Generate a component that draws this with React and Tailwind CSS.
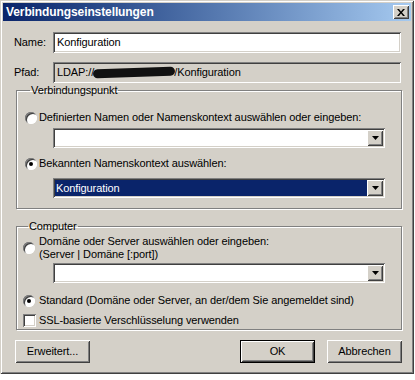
import React from 'react';

const sunken =
  'shadow-[inset_1px_1px_0_#808080,inset_-1px_-1px_0_#ffffff,inset_2px_2px_0_#404040,inset_-2px_-2px_0_#d4d0c8]';
const raised =
  'shadow-[inset_1px_1px_0_#ffffff,inset_-1px_-1px_0_#404040,inset_2px_2px_0_#d4d0c8,inset_-2px_-2px_0_#808080]';

function Radio({ checked }) {
  return (
    <div className="relative w-[12px] h-[12px] shrink-0 rounded-full bg-white shadow-[inset_1px_1px_0_#808080,inset_-1px_-1px_0_#ffffff,inset_2px_2px_0_#404040]">
      {checked && <div className="absolute left-[4px] top-[4px] w-[4px] h-[4px] rounded-full bg-black" />}
    </div>
  );
}

function Combo({ value, selected }) {
  return (
    <div className={`flex h-[20px] p-[2px] bg-white ${sunken}`}>
      <div className={`flex-1 flex items-center pl-[1px] ${selected ? 'bg-[#0a246a] text-white' : ''}`}>
        {value}
      </div>
      <div className={`w-[16px] flex items-center justify-center bg-[#d4d0c8] ${raised}`}>
        <svg width="7" height="4" viewBox="0 0 7 4">
          <path d="M0 0h7L3.5 4z" fill="#000" />
        </svg>
      </div>
    </div>
  );
}

function Button({ children, def, className }) {
  return (
    <div className={`h-[23px] w-[75px] flex items-center justify-center ${def ? 'border border-black' : ''} ${className || ''}`}>
      <div className={`w-full h-full flex items-center justify-center bg-[#d4d0c8] ${raised}`}>{children}</div>
    </div>
  );
}

export default function App() {
  return (
    <div className="w-[415px] h-[380px] bg-white text-[11px] leading-[13px] tracking-[-0.1px] text-black font-['Liberation_Sans',sans-serif]">
      <div className="w-[414px] h-[374px] p-[3px] bg-[#d4d0c8] shadow-[inset_1px_1px_0_#d4d0c8,inset_-1px_-1px_0_#404040,inset_2px_2px_0_#ffffff,inset_-2px_-2px_0_#808080]">
        <div className="h-[18px] flex items-center justify-between pl-[3px] pr-[2px] bg-gradient-to-r from-[#0a246a] to-[#a6caf0]">
          <span className="text-white font-bold text-[12px] tracking-[-0.1px]">Verbindungseinstellungen</span>
          <div className={`w-[16px] h-[14px] flex items-center justify-center bg-[#d4d0c8] ${raised}`}>
            <svg width="8" height="7" viewBox="0 0 8 7">
              <path d="M0 0h2l2 2.5L6 0h2L5 3.5 8 7H6L4 4.5 2 7H0l3-3.5z" fill="#000" />
            </svg>
          </div>
        </div>

        <div className="mt-[11px] ml-[11px] mr-[10px] h-[21px] flex items-center">
          <span className="w-[39px]">Name:</span>
          <div className={`flex-1 h-full flex items-center pl-[4px] bg-white ${sunken}`}>Konfiguration</div>
        </div>
        <div className="mt-[9px] ml-[11px] mr-[10px] h-[21px] flex items-center">
          <span className="w-[39px]">Pfad:</span>
          <div className={`flex-1 h-full flex items-center pl-[4px] ${sunken}`}>
            LDAP://
            <span className="inline-block w-[82px] h-[9px] bg-[#111] rounded-full -rotate-2 mx-[-1px]" />
            /Konfiguration
          </div>
        </div>

        <fieldset className="mt-[1px] ml-[13px] mr-[9px] pl-[8px] pr-[16px] pb-[10px] border border-[#808080] shadow-[inset_1px_1px_0_#ffffff,1px_1px_0_#ffffff]">
          <legend className="ml-[5px] px-[1px]">Verbindungspunkt</legend>
          <div className="mt-[14px] h-[13px] flex items-center gap-[1px]">
            <Radio />
            <span className="ml-[1px]">Definierten Namen oder Namenskontext auswählen oder eingeben:</span>
          </div>
          <div className="mt-[4px] ml-[28px]">
            <Combo value="" />
          </div>
          <div className="mt-[9px] h-[13px] flex items-center gap-[1px]">
            <Radio checked />
            <span className="ml-[1px]">Bekannten Namenskontext auswählen:</span>
          </div>
          <div className="mt-[8px] ml-[28px]">
            <Combo value="Konfiguration" selected />
          </div>
        </fieldset>

        <fieldset className="mt-[11px] ml-[13px] mr-[9px] pl-[6px] pr-[16px] pb-[2px] border border-[#808080] shadow-[inset_1px_1px_0_#ffffff,1px_1px_0_#ffffff]">
          <legend className="ml-[5px] px-[1px]">Computer</legend>
          <div className="mt-[2px] flex items-center gap-[3px]">
            <Radio />
            <div className="ml-[1px]">
              <div>Domäne oder Server auswählen oder eingeben:</div>
              <div>(Server | Domäne [:port])</div>
            </div>
          </div>
          <div className="mt-[2px] ml-[30px]">
            <Combo value="" />
          </div>
          <div className="mt-[11px] h-[13px] flex items-center gap-[3px]">
            <Radio checked />
            <span className="ml-[1px]">Standard (Domäne oder Server, an der/dem Sie angemeldet sind)</span>
          </div>
          <div className="mt-[7px] h-[13px] flex items-center gap-[3px]">
            <div className={`w-[13px] h-[13px] bg-white ${sunken}`} />
            <span>SSL-basierte Verschlüsselung verwenden</span>
          </div>
        </fieldset>

        <div className="mt-[10px] ml-[12px] mr-[9px] flex items-center">
          <Button>Erweitert...</Button>
          <div className="flex-1" />
          <Button def>OK</Button>
          <Button className="ml-[12px]">Abbrechen</Button>
        </div>
      </div>
    </div>
  );
}
